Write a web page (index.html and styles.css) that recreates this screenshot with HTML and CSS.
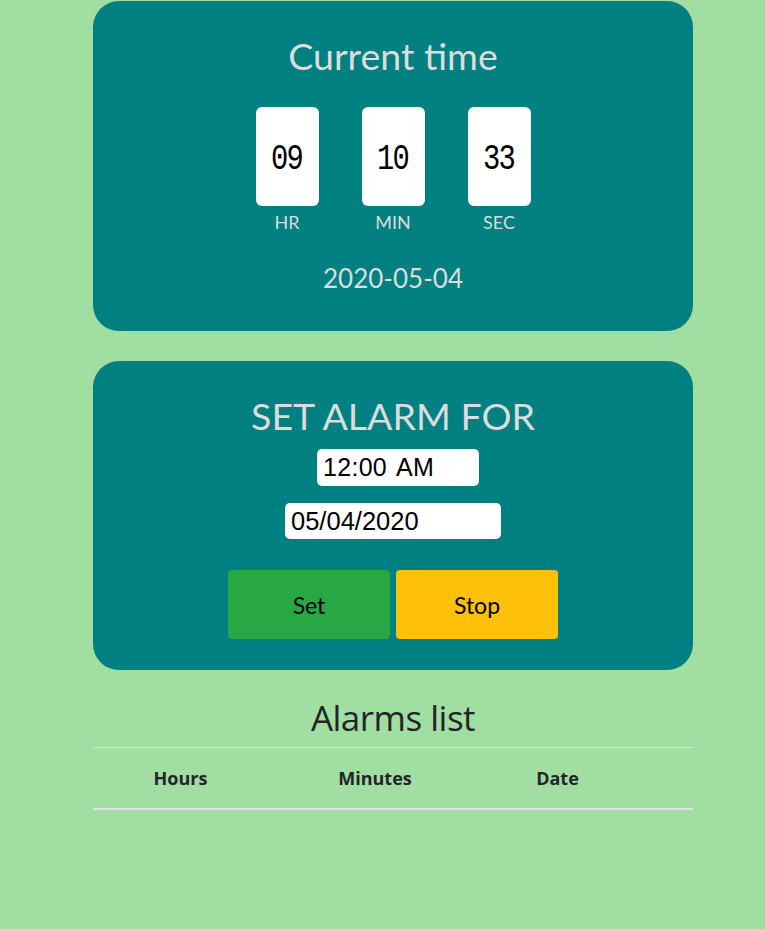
FILE: index.html
```html
<!DOCTYPE html>
<html>
<head>
<meta charset="utf-8">
<link rel="stylesheet" href="styles.css">
</head>
<body>
<main class="page">
  <section class="card clock">
    <h1 class="card-title">Current time</h1>
    <div class="digits">
      <div class="unit"><div class="digit-box"><span class="digit-text">09</span></div><span class="unit-label">HR</span></div>
      <div class="unit"><div class="digit-box"><span class="digit-text">10</span></div><span class="unit-label">MIN</span></div>
      <div class="unit"><div class="digit-box"><span class="digit-text">33</span></div><span class="unit-label">SEC</span></div>
    </div>
    <div class="date">2020-05-04</div>
  </section>

  <section class="card alarm">
    <h2 class="alarm-title">SET ALARM FOR</h2>
    <div class="field time-field">12:00 AM</div>
    <div class="field date-field">05/04/2020</div>
    <div class="buttons">
      <button class="btn btn-set">Set</button>
      <button class="btn btn-stop">Stop</button>
    </div>
  </section>

  <section class="list">
    <h2 class="list-title">Alarms list</h2>
    <div class="table-head">
      <span class="th th-hours">Hours</span>
      <span class="th th-min">Minutes</span>
      <span class="th th-date">Date</span>
    </div>
  </section>
</main>
</body>
</html>
```
FILE: styles.css
```css
html, body {
  margin: 0;
  padding: 0;
}
body {
  background: #a1dea1;
  font-family: Lato, "Open Sans", sans-serif;
  height: 929px;
  overflow: hidden;
}
.page {
  width: 600px;
  margin-left: 93px;
  padding-top: 1px;
  display: flex;
  flex-direction: column;
}
.card {
  background: #008080;
  border-radius: 26px;
  color: #dcdcdc;
  display: flex;
  flex-direction: column;
  align-items: center;
}
.clock {
  height: 330px;
}
.card-title {
  margin: 33px 0 0;
  font-weight: 400;
  font-size: 37.5px;
  line-height: 44px;
}
.digits {
  display: flex;
  gap: 43px;
  margin-top: 29px;
}
.unit {
  display: flex;
  flex-direction: column;
  align-items: center;
}
.digit-box {
  width: 63px;
  height: 99px;
  background: #fff;
  border-radius: 6px;
  display: flex;
  align-items: center;
  justify-content: center;
  color: #000;
  padding-top: 6px;
  box-sizing: border-box;
}
.digit-text {
  display: inline-block;
  font-family: "Liberation Mono", monospace;
  font-size: 36px;
  transform: scaleX(0.8);
  letter-spacing: -2px;
}
.unit-label {
  margin-top: 4px;
  font-size: 18px;
  line-height: 24px;
}
.date {
  margin-top: 28px;
  font-size: 26px;
  line-height: 32px;
}
.alarm {
  margin-top: 30px;
  height: 309px;
}
.alarm-title {
  margin: 33px 0 0;
  font-weight: 400;
  font-size: 37.5px;
  line-height: 44px;
}
.field {
  background: #fff;
  border-radius: 5px;
  color: #000;
  font-family: "Liberation Sans", Arial, sans-serif;
  font-size: 25px;
  padding-left: 6px;
  box-sizing: border-box;
}
.time-field {
  width: 162px;
  height: 37px;
  line-height: 37px;
  margin-top: 11px;
  margin-left: 10px;
  word-spacing: 3px;
  letter-spacing: 0.3px;
}
.date-field {
  width: 216px;
  height: 36px;
  margin-top: 17px;
  line-height: 36px;
  font-size: 25.5px;
}
.buttons {
  display: flex;
  gap: 6px;
  margin-top: 31px;
}
.btn {
  width: 162px;
  height: 69px;
  border: none;
  border-radius: 4px;
  font-family: Lato, "Open Sans", sans-serif;
  font-size: 23px;
  color: #000;
  padding: 0;
}
.btn-set { background: #28a745; }
.btn-stop { background: #ffc107; }
.list {
  display: flex;
  flex-direction: column;
}
.list-title {
  margin: 26px 0 0;
  text-align: center;
  font-weight: 400;
  font-size: 35px;
  line-height: 44px;
  color: #212529;
  font-family: "Open Sans", sans-serif;
  letter-spacing: -0.5px;
}
.table-head {
  margin-top: 7px;
  border-top: 1px solid #dee2e6;
  border-bottom: 2px solid #dee2e6;
  height: 60px;
  display: grid;
  grid-template-columns: 175px 214px 151px 1fr;
  align-items: center;
}
.th {
  text-align: center;
  font-weight: 700;
  font-size: 18px;
  color: #212529;
  font-family: "Open Sans", sans-serif;
}
```
